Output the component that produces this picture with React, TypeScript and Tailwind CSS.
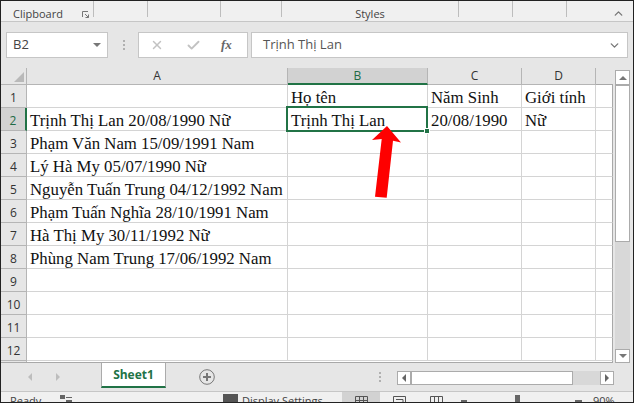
import React from 'react';
import { ChevronUp, ChevronDown, X, Check } from 'lucide-react';

const UI = "font-['Open_Sans',sans-serif]";

const people = [
  'Trịnh Thị Lan 20/08/1990 Nữ',
  'Phạm Văn Nam 15/09/1991 Nam',
  'Lý Hà My 05/07/1990 Nữ',
  'Nguyễn Tuấn Trung 04/12/1992 Nam',
  'Phạm Tuấn Nghĩa 28/10/1991 Nam',
  'Hà Thị My 30/11/1992 Nữ',
  'Phùng Nam Trung 17/06/1992 Nam',
];

const extra: Record<number, string[]> = {
  1: ['Họ tên', 'Năm Sinh', 'Giới tính'],
  2: ['Trịnh Thị Lan', '20/08/1990', 'Nữ'],
};

const Ribbon = () => (
  <div className="h-[21px] shrink-0 flex border-b border-[#c6c6c6] bg-[#f0f0f0] text-[11px] text-[#444]">
    <div className="w-[93px] pl-[12px] flex border-r border-[#bdbdbd] h-[16px] relative">
      <span className="leading-[26px]">Clipboard</span>
      <svg className="absolute left-[81px] top-[10px]" width="7" height="7" viewBox="0 0 7 7" fill="none" stroke="#777">
        <path d="M0.5 6V0.5H6M3 3L6.5 6.5M6.5 3.5V6.5H3.5" />
      </svg>
    </div>
    <div className="w-[54px] h-[16px] border-r border-[#bdbdbd]" />
    <div className="w-[73px] h-[16px] border-r border-[#bdbdbd]" />
    <div className="w-[61px] h-[16px] border-r border-[#bdbdbd]" />
    <div className="w-[177px] h-[16px] border-r border-[#bdbdbd] flex justify-center">
      <span className="leading-[26px] whitespace-nowrap">Styles</span>
    </div>
    <div className="w-[54px] h-[16px] border-r border-[#bdbdbd]" />
    <div className="w-[54px] h-[16px] border-r border-[#bdbdbd]" />
    <div className="flex-1 flex justify-end pr-[8px] pt-[6px]">
      <ChevronUp size={13} strokeWidth={2.5} className="text-[#777]" />
    </div>
  </div>
);

const FormulaBar = () => (
  <div className="h-[46px] shrink-0 bg-[#e6e6e6] flex items-start pt-[10px] pl-[5px] pr-[5px] text-[14px] text-[#444]">
    <div className="w-[102px] h-[26px] bg-white border border-[#c6c6c6] flex items-center justify-between pl-[6px] pr-[6px]">
      <span className="text-[13px]">B2</span>
      <div className="w-0 h-0 border-x-[4px] border-x-transparent border-t-[4px] border-t-[#777]" />
    </div>
    <div className="w-[30px] h-[26px] flex flex-col items-center justify-center gap-[2px] pl-[2px]">
      <div className="w-[2px] h-[2px] bg-[#b0b0b0]" />
      <div className="w-[2px] h-[2px] bg-[#b0b0b0]" />
      <div className="w-[2px] h-[2px] bg-[#b0b0b0]" />
    </div>
    <div className="w-[110px] h-[26px] bg-white border border-[#c6c6c6] flex items-center">
      <X size={14} strokeWidth={2.5} className="text-[#c2c2c2] ml-[11px] shrink-0" />
      <Check size={15} strokeWidth={3} className="text-[#c2c2c2] ml-[22px] shrink-0" />
      <span className="ml-[20px] font-['Liberation_Serif',serif] italic font-bold text-[13px] text-[#666]">fx</span>
    </div>
    <div className="flex-1 ml-[3px] h-[26px] bg-white border border-[#c6c6c6] flex items-center justify-between pl-[11px] pr-[6px]">
      <span className="text-[13px] text-[#555]">Trịnh Thị Lan</span>
      <ChevronDown size={13} strokeWidth={2.5} className="text-[#777]" />
    </div>
  </div>
);

const ColHead = ({ label, active, w }: { label: string; active?: boolean; w: string }) => (
  <div className={`${w} h-[17px] flex items-center justify-center text-[12px] leading-none border-r border-[#b5b5b5] ${active ? 'bg-[#d2d2d2] text-[#1f6b45] border-b-2 border-b-[#217346]' : 'bg-[#e6e6e6] text-[#333] border-b border-b-[#b5b5b5]'}`}>
    {label}
  </div>
);

const Row = ({ n }: { n: number }) => {
  const cells = extra[n] ?? ['', '', ''];
  const active = n === 2;
  return (
    <div className="flex h-[23px] shrink-0">
      <div className={`${UI} w-[26px] shrink-0 flex items-center justify-center pt-[4px] text-[12px] border-b border-r ${active ? 'bg-[#d2d2d2] text-[#1f6b45] border-r-2 border-r-[#217346] border-b-[#b5b5b5]' : 'bg-[#e6e6e6] text-[#333] border-[#b5b5b5]'}`}>
        {n}
      </div>
      <div className="w-[261px] shrink-0 border-b border-r border-[#d4d4d4] pl-[3px] whitespace-nowrap leading-[26px]">
        {n >= 2 && n <= 8 ? people[n - 2] : ''}
      </div>
      <div className="w-[140px] shrink-0 border-b border-r border-[#d4d4d4] pl-[3px] whitespace-nowrap leading-[26px] relative">
        {cells[0]}
        {active && (
          <div className="absolute left-[-2px] top-[-2px] w-[142px] h-[26px] border-2 border-[#217346]">
            <div className="absolute right-[-4px] bottom-[-4px] w-[6px] h-[6px] bg-[#217346] border border-white" />
          </div>
        )}
      </div>
      <div className="w-[94px] shrink-0 border-b border-r border-[#d4d4d4] pl-[3px] whitespace-nowrap leading-[26px]">{cells[1]}</div>
      <div className="w-[74px] shrink-0 border-b border-r border-[#d4d4d4] pl-[3px] whitespace-nowrap leading-[26px]">{cells[2]}</div>
      <div className="flex-1 border-b border-b-[#d4d4d4] border-r border-r-[#a8a8a8]" />
    </div>
  );
};

const Sheet = () => (
  <div className="h-[295px] shrink-0 flex bg-[#e6e6e6]">
    <div className="w-[612px] shrink-0 flex flex-col bg-white relative font-['Liberation_Serif',serif] text-[16.8px] text-[#111]">
      <div className={`flex ${UI}`}>
        <div className="w-[26px] h-[17px] bg-[#e6e6e6] border-r border-b border-[#b5b5b5] relative">
          <div className="absolute right-[2px] bottom-[2px] w-0 h-0 border-l-[10px] border-l-transparent border-b-[10px] border-b-[#b9b9b9]" />
        </div>
        <ColHead label="A" w="w-[261px]" />
        <ColHead label="B" w="w-[140px]" active />
        <ColHead label="C" w="w-[94px]" />
        <ColHead label="D" w="w-[74px]" />
        <div className="flex-1 h-[17px] bg-[#e6e6e6] border-b border-[#a8a8a8]" />
      </div>
      <div className="flex-1 min-h-0 flex flex-col">
        {[1, 2, 3, 4, 5, 6, 7, 8, 9, 10, 11, 12].map((n) => (
          <div key={n} className={n === 2 ? 'relative z-10' : ''}>
            <Row n={n} />
          </div>
        ))}
        <div className="flex flex-1 border-b border-r border-[#a8a8a8]">
          <div className="w-[26px] bg-[#e6e6e6] border-r border-[#b5b5b5]" />
        </div>
      </div>
      {/* red annotation arrow */}
      <svg className="absolute left-[370px] top-[57px] z-20" width="32" height="75" viewBox="0 0 32 75">
        <path d="M16 1L30 17.5L22 15.7L15.7 72.7L4 71.7L10.7 14L1 15Z" fill="#fe0000" />
      </svg>
    </div>
    <div className="flex flex-col w-[15px] ml-[2px] pt-[2px]">
      <div className="h-[15px] shrink-0 bg-white border border-[#ababab] flex items-center justify-center">
        <div className="w-0 h-0 border-x-[4px] border-x-transparent border-b-[4px] border-b-[#777]" />
      </div>
      <div className="h-[157px] shrink-0 bg-white border border-[#ababab]" />
      <div className="flex-1 bg-[#d8d8d8]" />
      <div className="h-[14px] shrink-0 bg-white border border-[#ababab] flex items-center justify-center">
        <div className="w-0 h-0 border-x-[4px] border-x-transparent border-t-[4px] border-t-[#777]" />
      </div>
    </div>
  </div>
);

const TabBar = () => (
  <div className="h-[29px] shrink-0 bg-[#e6e6e6] flex items-start border-b border-[#c6c6c6]">
    <div className="w-[100px] flex h-[28px] items-center pl-[27px] gap-[24px]">
      <div className="w-0 h-0 border-y-[4px] border-y-transparent border-r-[4px] border-r-[#bdbdbd]" />
      <div className="w-0 h-0 border-y-[4px] border-y-transparent border-l-[4px] border-l-[#bdbdbd]" />
    </div>
    <div className={`${UI} w-[65px] h-[25px] bg-white border-x border-[#ababab] border-b-2 border-b-[#217346] flex items-center justify-center text-[12px] font-bold text-[#217346]`}>
      Sheet1
    </div>
    <svg className="ml-[33px] mt-[6px]" width="16" height="16" viewBox="0 0 16 16" fill="none" stroke="#777" strokeWidth="1">
      <circle cx="8" cy="8" r="7.3" />
      <path d="M8 4V12M4 8H12" strokeWidth="2" />
    </svg>
    <div className="ml-[164px] mt-[9px] flex flex-col gap-[2px]">
      <div className="w-[2px] h-[2px] bg-[#b0b0b0]" />
      <div className="w-[2px] h-[2px] bg-[#b0b0b0]" />
      <div className="w-[2px] h-[2px] bg-[#b0b0b0]" />
    </div>
    <div className="ml-[16px] mt-[8px] w-[14px] h-[14px] bg-white border border-[#ababab] flex items-center justify-center">
      <div className="w-0 h-0 border-y-[4px] border-y-transparent border-r-[4px] border-r-[#666]" />
    </div>
    <div className="mt-[8px] w-[162px] h-[14px] bg-white border border-[#ababab]" />
    <div className="mt-[8px] w-[27px] h-[14px] bg-[#d8d8d8]" />
    <div className="mt-[8px] w-[14px] h-[14px] bg-white border border-[#ababab] flex items-center justify-center">
      <div className="w-0 h-0 border-y-[4px] border-y-transparent border-l-[4px] border-l-[#666]" />
    </div>
  </div>
);

const StatusBar = () => (
  <div className="flex-1 min-h-0 overflow-hidden bg-[#f0f0f0] flex items-start text-[11px] text-[#444]">
    <span className="ml-[9px] w-[50px] shrink-0 leading-[17px]">Ready</span>
    <svg className="mt-[3px] shrink-0" width="12" height="8" viewBox="0 0 12 8" fill="#666">
      <rect x="0" y="0" width="5" height="4" />
      <rect x="6" y="2" width="6" height="1" />
      <rect x="6" y="5" width="6" height="3" />
    </svg>
    <div className="ml-[151px] mt-[2px] w-[15px] h-[9px] bg-[#555] shrink-0" />
    <span className="ml-[4px] w-[100px] shrink-0 leading-[17px] whitespace-nowrap">Display Settings</span>
    <div className="w-[38px] h-[10px] bg-[#d2d2d2] flex justify-center pt-[4px] shrink-0">
      <svg width="13" height="11" viewBox="0 0 13 11" fill="none" stroke="#555"><path d="M0.5 11V0.5H12.5V11M4.5 0.5V11M8.5 0.5V11M0.5 4.5H12.5" /></svg>
    </div>
    <svg className="ml-[13px] mt-[4px] shrink-0" width="13" height="11" viewBox="0 0 13 11" fill="none" stroke="#555"><path d="M0.5 11V0.5H12.5V11M3 3.5H10V11" /></svg>
    <svg className="ml-[24px] mt-[4px] shrink-0" width="13" height="11" viewBox="0 0 13 11" fill="none" stroke="#555"><path d="M0.5 11V0.5H12.5V11M4.5 0.5V11M8.5 0.5V11" /></svg>
    <div className="ml-[18px] mt-[8px] w-[6px] h-[2px] bg-[#666] shrink-0" />
    <div className="ml-[48px] mt-[3px] w-[5px] h-[8px] bg-[#666] shrink-0" />
    <div className="ml-[55px] mt-[8px] w-[7px] h-[2px] bg-[#666] shrink-0" />
    <span className="ml-[11px] leading-[17px]">90%</span>
  </div>
);

export default function App() {
  return (
    <div className={`${UI} w-[634px] h-[403px] overflow-hidden flex flex-col border border-[#222] bg-[#e6e6e6]`}>
      <Ribbon />
      <FormulaBar />
      <Sheet />
      <TabBar />
      <StatusBar />
    </div>
  );
}
